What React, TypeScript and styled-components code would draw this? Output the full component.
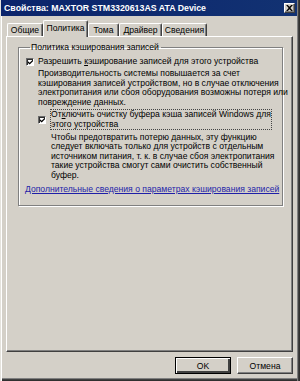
import React from "react";
import styled, { createGlobalStyle } from "styled-components";

const Global = createGlobalStyle`
  html, body { margin: 0; padding: 0; background: #d4d0c8; }
  * { box-sizing: border-box; }
`;

const Win = styled.div`
  width: 300px;
  height: 381px;
  background: #d4d0c8;
  font-family: "Liberation Sans", Arial, sans-serif;
  font-size: 8.6px;
  color: #000;
  display: flex;
  flex-direction: column;
  box-shadow: inset 1px 0 0 #e4e2dc, inset 2px 0 0 #ffffff, inset -1px 0 0 #303030,
    inset -2px 0 0 #404040, inset -3px 0 0 #808080, inset 0 -1px 0 #303030,
    inset 0 -2px 0 #404040, inset 0 -3px 0 #808080;
  overflow: hidden;
`;

const TitleBar = styled.div`
  height: 16px;
  margin: 0 3px 0 1px;
  background: linear-gradient(90deg, #0b246b 0%, #0f2c70 60%, #123272 100%);
  display: flex;
  align-items: center;
  justify-content: space-between;
  padding: 0 2px 0 3px;
`;

const Title = styled.span`
  color: #fff;
  font-weight: bold;
  font-size: 8.8px;
  white-space: nowrap;
`;

const CloseBtn = styled.div`
  width: 11px;
  height: 10px;
  background: #d4d0c8;
  border: 1px solid;
  border-color: #fff #404040 #404040 #fff;
  box-shadow: inset -1px -1px 0 #808080;
  display: flex;
  align-items: center;
  justify-content: center;
`;

const Body = styled.div`
  flex: 1;
  display: flex;
  flex-direction: column;
  padding: 5px 0 0 6px;
`;

const Tabs = styled.div`
  display: flex;
  align-items: flex-end;
  height: 15px;
  padding-left: 1px;
  position: relative;
  z-index: 1;
`;

const Tab = styled.div<{ $active?: boolean; $w: number }>`
  width: ${(p) => p.$w}px;
  height: ${(p) => (p.$active ? 17 : 13)}px;
  margin-bottom: ${(p) => (p.$active ? -1 : 0)}px;
  padding-top: ${(p) => (p.$active ? 2 : 1)}px;
  text-align: center;
  background: #d4d0c8;
  border: 1px solid;
  border-bottom: none;
  border-color: #fff #404040 #404040 #fff;
  border-radius: 2px 2px 0 0;
  box-shadow: inset -1px 0 0 #808080;
  white-space: nowrap;
  line-height: 10px;
`;

const Panel = styled.div`
  width: 287px;
  height: 316px;
  border: 1px solid;
  border-color: #fff #404040 #404040 #fff;
  box-shadow: inset -1px -1px 0 #808080;
  padding: 5px 0 0 11px;
`;

const Group = styled.fieldset`
  margin: 0;
  width: 265px;
  min-width: 0;
  height: 164px;
  border: 1px solid #808080;
  box-shadow: 1px 1px 0 #fff, inset 1px 1px 0 #fff;
  padding: 5px 0 0 7px;
  display: flex;
  flex-direction: column;
  align-items: flex-start;
`;

const Legend = styled.legend`
  padding: 0 2px 0 1px;
  margin-left: 4px;
  line-height: 10px;
  white-space: nowrap;
`;

const CheckRow = styled.div<{ $indent?: number; $top?: number }>`
  display: flex;
  align-items: center;
  gap: 4px;
  margin-left: ${(p) => p.$indent ?? 0}px;
  margin-top: ${(p) => p.$top ?? 0}px;
`;

const Box = styled.div`
  width: 8px;
  height: 8px;
  background: #fff;
  border: 1px solid;
  border-color: #6a6a6a #fff #fff #6a6a6a;
  box-shadow: inset 1px 1px 0 #303030;
  flex: none;
  display: flex;
  align-items: center;
  justify-content: center;
  padding: 1px 0 0 1px;
`;

const Label = styled.div<{ $focus?: boolean }>`
  line-height: 9.5px;
  padding: ${(p) => (p.$focus ? "1px 1px" : "0")};
  outline: ${(p) => (p.$focus ? "1px dotted #444" : "none")};
  outline-offset: -1px;
  white-space: nowrap;
`;

const Desc = styled.div<{ $indent: number; $top: number }>`
  margin-left: ${(p) => p.$indent}px;
  margin-top: ${(p) => p.$top}px;
  line-height: 9.5px;
  white-space: nowrap;
`;

const U = styled.span`
  text-decoration: underline;
`;

const Link = styled.div`
  margin-top: 4.5px;
  margin-left: -1px;
  color: #1f1fa8;
  text-decoration: underline;
  line-height: 9.5px;
  white-space: nowrap;
`;

const Footer = styled.div`
  display: flex;
  justify-content: flex-end;
  gap: 6px;
  padding: 5px 7px 0 0;
`;

const Button = styled.div<{ $def?: boolean }>`
  width: 56px;
  height: 17px;
  display: flex;
  align-items: center;
  justify-content: center;
  background: #d4d0c8;
  border: 1px solid;
  border-color: ${(p) => (p.$def ? "#000" : "#fff #404040 #404040 #fff")};
  box-shadow: ${(p) =>
    p.$def ? "inset 1px 1px 0 #fff, inset -2px -2px 0 #404040" : "inset -1px -1px 0 #808080"};
`;

function Check() {
  return (
    <svg width="6" height="6" viewBox="0 0 7 7">
      <path d="M0 2.5 L2.3 4.6 L7 0 L7 2.3 L2.3 7 L0 4.8 Z" fill="#000" />
    </svg>
  );
}

export default function App() {
  return (
    <>
      <Global />
      <Win>
        <TitleBar>
          <Title>Свойства: MAXTOR STM3320613AS ATA Device</Title>
          <CloseBtn>
            <svg width="7" height="6" viewBox="0 0 8 7">
              <path d="M0 0 L2 0 L4 2 L6 0 L8 0 L5 3.5 L8 7 L6 7 L4 5 L2 7 L0 7 L3 3.5 Z" fill="#000" />
            </svg>
          </CloseBtn>
        </TitleBar>
        <Body>
          <Tabs>
            <Tab $w={36}>Общие</Tab>
            <Tab $w={45} $active>Политика</Tab>
            <Tab $w={31}>Тома</Tab>
            <Tab $w={43}>Драйвер</Tab>
            <Tab $w={45}>Сведения</Tab>
          </Tabs>
          <Panel>
            <Group>
              <Legend>Политика кэширования записей</Legend>
              <CheckRow>
                <Box><Check /></Box>
                <Label>Разрешить <U>к</U>эширование записей для этого устройства</Label>
              </CheckRow>
              <Desc $indent={12} $top={2.5}>
                Производительность системы повышается за счет<br />
                кэширования записей устройством, но в случае отключения<br />
                электропитания или сбоя оборудования возможны потеря или<br />
                повреждение данных.
              </Desc>
              <CheckRow $indent={12} $top={2}>
                <Box><Check /></Box>
                <Label $focus>
                  От<U>к</U>лючить очистку буфера кэша записей Windows для<br />
                  этого устройства
                </Label>
              </CheckRow>
              <Desc $indent={25} $top={2.5}>
                Чтобы предотвратить потерю данных, эту функцию<br />
                следует включать только для устройств с отдельным<br />
                источником питания, т. к. в случае сбоя электропитания<br />
                такие устройства смогут сами очистить собственный<br />
                буфер.
              </Desc>
              <Link>Дополнительные сведения о параметрах кэширования записей</Link>
            </Group>
          </Panel>
          <Footer>
            <Button $def>OK</Button>
            <Button>Отмена</Button>
          </Footer>
        </Body>
      </Win>
    </>
  );
}
